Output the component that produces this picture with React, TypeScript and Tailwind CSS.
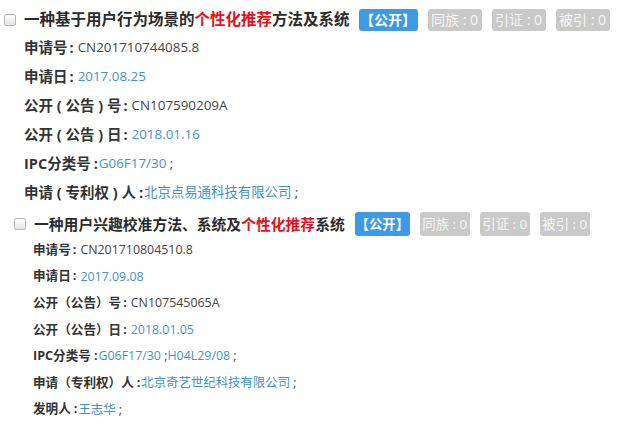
import React from "react";

const FONT = { fontFamily: '"Open Sans", "Noto Sans CJK SC", sans-serif' };

type Field = { label: string; sep: "full" | "half"; value: React.ReactNode };

function Checkbox() {
  return (
    <span className="inline-block w-[12px] h-[12px] rounded-[2px] border border-[#b5b5b5] bg-gradient-to-b from-white to-[#e4e4e4] shrink-0" />
  );
}

function Tag({ children, blue, w, h }: { children: React.ReactNode; blue?: boolean; w: string; h: string }) {
  return (
    <span
      className={
        "inline-flex items-center justify-center rounded-[3px] whitespace-nowrap " +
        w +
        " " +
        h +
        (blue ? " bg-[#3d9be5] text-white font-bold" : " bg-[#c9c9c9] text-[#f6f6f6]")
      }
    >
      {children}
    </span>
  );
}

function Blue({ children }: { children: React.ReactNode }) {
  return <span className="text-[#3f92d2]">{children}</span>;
}

function FieldRow({ f, h, valueSize }: { f: Field; h: string; valueSize: string }) {
  return (
    <div className={"flex items-center whitespace-pre " + h}>
      <span className="font-bold text-[#333]">{f.label}</span>
      {f.sep === "full" ? (
        <span className="font-bold text-[#333] ml-[2px] mr-[4px]">:</span>
      ) : (
        <span className="font-bold text-[#333] ml-[3px] mr-[1px]">:</span>
      )}
      <span className={"text-[#444] " + valueSize}>{f.value}</span>
    </div>
  );
}

const fields1: Field[] = [
  { label: "申请号", sep: "full", value: "CN201710744085.8" },
  { label: "申请日", sep: "full", value: <Blue>2017.08.25</Blue> },
  { label: "公开 ( 公告 ) 号", sep: "full", value: "CN107590209A" },
  { label: "公开 ( 公告 ) 日", sep: "full", value: <Blue>2018.01.16</Blue> },
  { label: "IPC分类号", sep: "half", value: <><Blue>G06F17/30</Blue> ;</> },
  { label: "申请 ( 专利权 ) 人", sep: "half", value: <><Blue>北京点易通科技有限公司</Blue> ;</> },
];

const fields2: Field[] = [
  { label: "申请号", sep: "full", value: "CN201710804510.8" },
  { label: "申请日", sep: "full", value: <Blue>2017.09.08</Blue> },
  { label: "公开（公告）号", sep: "full", value: "CN107545065A" },
  { label: "公开（公告）日", sep: "full", value: <Blue>2018.01.05</Blue> },
  { label: "IPC分类号", sep: "half", value: <><Blue>G06F17/30</Blue> ;<Blue>H04L29/08</Blue> ;</> },
  { label: "申请（专利权）人", sep: "half", value: <><Blue>北京奇艺世纪科技有限公司</Blue> ;</> },
  { label: "发明人", sep: "half", value: <><Blue>王志华</Blue> ;</> },
];

export default function App() {
  return (
    <div className="w-[619px] h-[428px] bg-white overflow-hidden" style={FONT}>
      {/* first result */}
      <div className="pt-[6px] pl-[4px]">
        <div className="flex items-center h-[27px]">
          <Checkbox />
          <span className="ml-[8px] text-[15.5px] font-bold text-[#2b2b2b] whitespace-nowrap">
            一种基于用户行为场景的<span className="text-[#e8101a]">个性化推荐</span>方法及系统
          </span>
          <div className="flex items-center gap-[10px] ml-[9px] text-[14px]">
            <Tag blue w="w-[59px]" h="h-[22px]">【公开】</Tag>
            <Tag w="w-[54px]" h="h-[22px]">同族 : 0</Tag>
            <Tag w="w-[54px]" h="h-[22px]">引证 : 0</Tag>
            <Tag w="w-[54px]" h="h-[22px]">被引 : 0</Tag>
          </div>
        </div>
        <div className="pl-[20px] text-[14.5px]">
          {fields1.map((f, i) => (
            <FieldRow key={i} f={f} h="h-[29px]" valueSize="text-[13.4px]" />
          ))}
        </div>
      </div>

      {/* second result */}
      <div className="mt-[4px] pl-[14px]">
        <div className="flex items-center h-[26px]">
          <Checkbox />
          <span className="ml-[8px] text-[14.8px] font-bold text-[#2b2b2b] whitespace-nowrap">
            一种用户兴趣校准方法、系统及<span className="text-[#e8101a]">个性化推荐</span>系统
          </span>
          <div className="flex items-center gap-[10px] ml-[10px] text-[13.4px]">
            <Tag blue w="w-[55px]" h="h-[24px]">【公开】</Tag>
            <Tag w="w-[50px]" h="h-[24px]">同族 : 0</Tag>
            <Tag w="w-[50px]" h="h-[24px]">引证 : 0</Tag>
            <Tag w="w-[50px]" h="h-[24px]">被引 : 0</Tag>
          </div>
        </div>
        <div className="pl-[19px] text-[12.6px]">
          {fields2.map((f, i) => (
            <FieldRow key={i} f={f} h="h-[26.6px]" valueSize="text-[12.4px]" />
          ))}
        </div>
      </div>
    </div>
  );
}
